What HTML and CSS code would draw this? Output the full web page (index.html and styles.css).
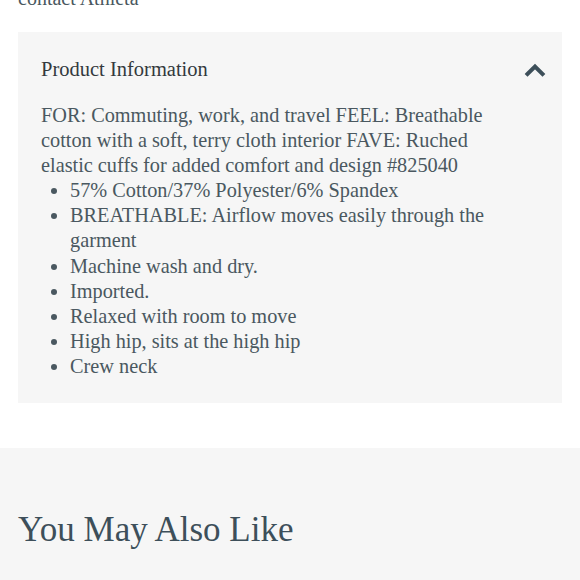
FILE: index.html
```html
<!DOCTYPE html>
<html>
<head>
<meta charset="utf-8">
<link rel="stylesheet" href="styles.css">
</head>
<body>
<p class="contact">contact Athleta</p>
<section class="card">
  <div class="card-head">
    <h2 class="card-title">Product Information</h2>
    <svg class="chevron" width="22" height="14" viewBox="0 0 22 14"><path d="M3.5 11 L11 3.5 L18.5 11" fill="none" stroke="#3d4f5a" stroke-width="4" stroke-linecap="square"/></svg>
  </div>
  <p class="desc">FOR: Commuting, work, and travel FEEL: Breathable cotton with a soft, terry cloth interior FAVE: Ruched elastic cuffs for added comfort and design #825040</p>
  <ul class="list">
    <li>57% Cotton/37% Polyester/6% Spandex</li>
    <li>BREATHABLE: Airflow moves easily through the garment</li>
    <li>Machine wash and dry.</li>
    <li>Imported.</li>
    <li>Relaxed with room to move</li>
    <li>High hip, sits at the high hip</li>
    <li>Crew neck</li>
  </ul>
</section>
<section class="also">
  <h2 class="also-title">You May Also Like</h2>
</section>
</body>
</html>
```
FILE: styles.css
```css
html, body {
  margin: 0;
  padding: 0;
  background: #ffffff;
  font-family: "Liberation Serif", "Times New Roman", serif;
}
.contact {
  margin: -14px 18px 0;
  font-size: 20px;
  line-height: 25px;
  color: #4a5860;
}
.card {
  margin: 21px 18px 0;
  background: #f6f6f6;
  padding: 25px 47px 23px 23px;
}
.card-head {
  display: flex;
  justify-content: space-between;
  align-items: center;
  height: 25px;
  margin-right: -24px;
}
.card-title {
  margin: 0;
  font-size: 20.5px;
  font-weight: normal;
  line-height: 25px;
  color: #33393d;
}
.chevron {
  display: block;
  margin-right: -7px;
}
.desc {
  margin: 21px 0 0;
  font-size: 20.3px;
  line-height: 25px;
  color: #4a5860;
}
.list {
  margin: 0;
  padding-left: 29px;
  font-size: 20.3px;
  line-height: 25.2px;
  color: #4a5860;
}
.also {
  margin-top: 45px;
  background: #f6f6f6;
  padding: 60px 18px 40px;
}
.also-title {
  margin: 0;
  font-size: 35px;
  font-weight: normal;
  line-height: 44px;
  color: #3d4f5a;
}
```
